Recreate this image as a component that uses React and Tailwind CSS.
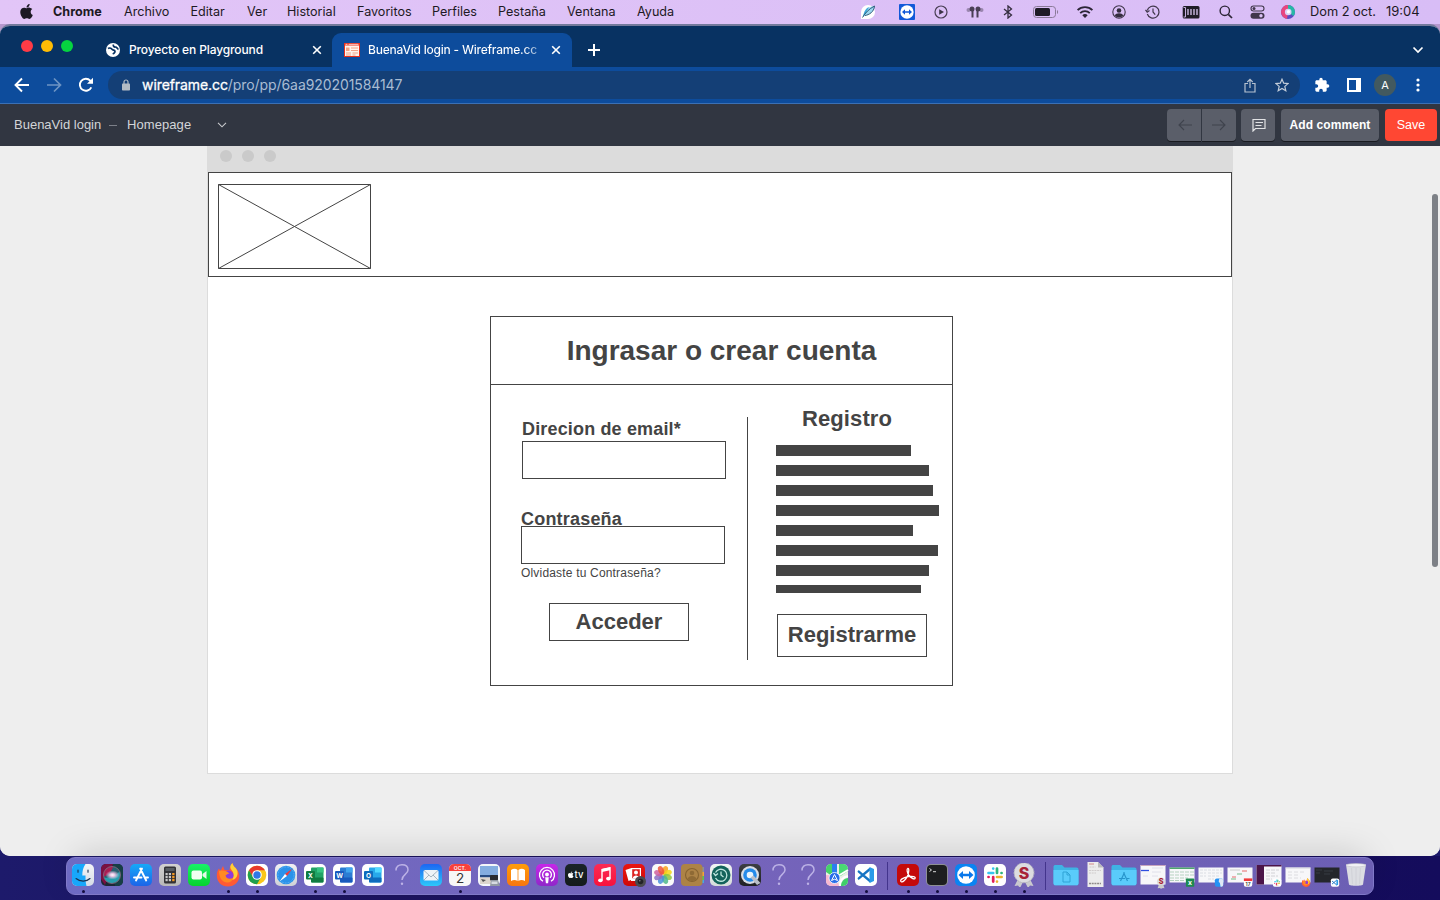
import React, { useId } from "react";
import { FaApple } from "react-icons/fa";
import { MdExtension } from "react-icons/md";

const P = ({ children, fill, to }) => {
  const id = useId();
  return (
    <svg viewBox="0 0 24 24" className="h-6 w-6 shrink-0">
      {to && (
        <linearGradient id={id} x1="0" y1="0" x2="0" y2="1"><stop stopColor={fill} /><stop offset="1" stopColor={to} /></linearGradient>
      )}
      {fill && <rect x="1" y="1" width="22" height="22" rx="5" fill={to ? `url(#${id})` : fill} />}
      {children}
    </svg>
  );
};

const sans = "Inter, sans-serif";

function Office({ light, mid, dark, letter }) {
  return (
    <P fill="#fff">
      <rect x="8" y="4.500" width="12.500" height="15" rx="1" fill={mid} />
      <rect x="14" y="4.500" width="6.500" height="5" fill={light} />
      <rect x="8" y="14.500" width="12.500" height="5" rx="1" fill={dark} />
      <rect x="3" y="8" width="9" height="8.500" rx="1" fill={dark} />
      <text x="7.500" y="14.600" fontSize="6.500" fontWeight="700" fill="#fff" textAnchor="middle" fontFamily={sans}>{letter}</text>
    </P>
  );
}

const Question = () => (
  <P>
    <path d="M6 7.500C6 3.500 8.500 1.800 12 1.800s6 2 6 5.200c0 4.500-6 4.500-6 10" fill="none" stroke="#bcb2e6" strokeWidth="1.500" />
    <circle cx="12" cy="20.800" r="1.200" fill="#bcb2e6" />
  </P>
);

const Finder = () => (
  <P fill="#f4f5f7" to="#d5dbe6">
    <path d="M6 1h8.500c-2.500 4-3.200 7-3.200 11.500h3.200c0 4 .2 7.500 1 10.500H6a5 5 0 0 1-5-5V6a5 5 0 0 1 5-5z" fill="#18a7fb" />
    <path d="M7 7v2.200M17 7v2.200M5 15.500c4 3.500 10.500 3.500 14 0" fill="none" stroke="#1b3250" strokeWidth="1.100" strokeLinecap="round" />
  </P>
);
const SiriApp = () => {
  const id = useId();
  return (
    <P fill="#1d2836">
      <path d="M1 16V6a5 5 0 0 1 5-5h7L5 22z" fill="#7a1040" />
      <path d="M13 1h5a5 5 0 0 1 5 5v12a5 5 0 0 1-5 5h-3z" fill="#173e44" />
      <radialGradient id={id}><stop stopColor="#fff" /><stop offset=".35" stopColor="#e7c4e4" /><stop offset="1" stopColor="#e7c4e4" stopOpacity="0" /></radialGradient>
      <circle cx="12" cy="12" r="8.500" fill="#285f70" />
      <path d="M3.700 10.500A8.500 8.500 0 0 1 13 3.600c-1 4-4 8-9 10z" fill="#a81f53" />
      <path d="M4 14.500c5 1 11-1 15.500-6 2 5-1 11.500-7.500 11.500-4 0-7-2.500-8-5.500z" fill="#279fae" />
      <ellipse cx="12.500" cy="12" rx="7" ry="4.500" fill={`url(#${id})`} />
      <circle cx="12" cy="12" r="8.500" fill="none" stroke="#8c6b82" strokeWidth=".8" />
    </P>
  );
};
const AppStore = () => (
  <P fill="#16a9f8" to="#1c64e8">
    <path d="M13 5.500L7 17.500M11.200 5.500l6 12M5 14.500h7.500M16 14.500h3" stroke="#fff" strokeWidth="1.900" strokeLinecap="round" />
  </P>
);
const Calculator = () => (
  <P fill="#d2d1d0" to="#b9b8b8">
    <rect x="6" y="3.500" width="12" height="17" rx="1.500" fill="#323236" />
    <rect x="7.500" y="5" width="9" height="3" fill="#575c61" />
    {[10.5, 13.5, 16.5].map((y) => (
      <g key={y}>
        <rect x="7.500" y={y - 0.5} width="2.200" height="2.200" fill="#c8c8c8" />
        <rect x="10.800" y={y - 0.5} width="2.200" height="2.200" fill="#c8c8c8" />
        <rect x="14.200" y={y - 0.5} width="2.300" height="2.200" fill="#f59a23" />
      </g>
    ))}
  </P>
);
const FaceTime = () => (
  <P fill="#18f267" to="#06d32f">
    <rect x="4.500" y="7.500" width="10.500" height="9" rx="2" fill="#f0fff2" />
    <path d="M15.500 11l4-3v8l-4-3z" fill="#e5fbe8" />
  </P>
);
const Fox = () => (
  <g>
    <path d="M12 23.500C5.500 23.500.8 19 .8 12.500c0-3 .8-5.500 2.200-7L4.500 8 7 3l1.500 4h5L14 4l2.500-4 1.500 4c3.500 2 5.300 5.500 5.300 9 0 6-5 10.500-11.300 10.500z" fill="#ff5a35" />
    <path d="M16.500 0c-2.500 2-3 4.500-1 7 3 3 2.500 8-.5 10 5 0 8-5 6-10-1-2.500-4-3.500-4.500-7z" fill="#ffd036" />
    <circle cx="12.500" cy="12.500" r="5" fill="#8d3bdc" />
    <path d="M3 8c4-1 8 0 10.500 2.500-2 0-2.500 1-4 2 1 4 5 4 8 2-1 4-4 5.500-7 5-5-.5-7.500-6-7.500-11.500z" fill="#ff8a22" />
  </g>
);
const ChromeApp = () => (
  <P fill="#fff">
    <circle cx="12" cy="12" r="9.300" fill="#fbc71a" />
    <path d="M3.950 7.350A9.300 9.300 0 0 1 20.050 7.350H12L8 14.300z" fill="#e8392c" />
    <path d="M3.950 7.350A9.300 9.300 0 0 0 12 21.300L16 14.300 8 14.300z" fill="#1fa04d" />
    <circle cx="12" cy="12" r="4.800" fill="#fff" />
    <circle cx="12" cy="12" r="3.700" fill="#2f78e6" />
  </P>
);
const Safari = () => (
  <P fill="#f1f1f3" to="#cfd1d6">
    <circle cx="12" cy="12" r="9.300" fill="#2a92ea" />
    <circle cx="12" cy="12" r="8" fill="none" stroke="#9bd0f7" strokeWidth=".7" strokeDasharray=".6 1" />
    <path d="M18.500 5.500l-5.500 7.500-2-2z" fill="#f03b3b" />
    <path d="M5.500 18.500l5.500-7.500 2 2z" fill="#fff" />
  </P>
);
const Mail = () => (
  <P fill="#1c66f3" to="#2cc8fa">
    <rect x="4.500" y="7" width="15" height="10.500" rx="1.500" fill="#eef3f7" />
    <path d="M5 7.500l7 6.500 7-6.500M5 17l5-5M19 17l-5-5" fill="none" stroke="#92a5b3" strokeWidth=".8" />
  </P>
);
const Calendar = () => (
  <P fill="#f7f7f7">
    <path d="M1 8V6a5 5 0 0 1 5-5h12a5 5 0 0 1 5 5v2z" fill="#f8413c" />
    <text x="12" y="6.500" fontSize="5" fontWeight="600" fill="#fff" textAnchor="middle" fontFamily={sans}>OCT.</text>
    <text x="12" y="20" fontSize="13.500" fill="#333" textAnchor="middle" fontFamily={sans}>2</text>
  </P>
);
const Preview = () => (
  <P fill="#f4f6fa">
    <path d="M3 3h18v10H3z" fill="#84ade0" />
    <path d="M3 12h18v2.500H3z" fill="#274b82" />
    <path d="M3 14.500h18V21H3z" fill="#dcd5cd" />
    <path d="M4 16l5 1-3 2z" fill="#555" />
    <rect x="13" y="12" width="8" height="5.500" rx="1" fill="#292b30" />
    <path d="M14 17h7l2 6h-10z" fill="#939aa5" />
    <rect x="14.500" y="18.500" width="6" height="2.500" fill="#d7dbe1" />
  </P>
);
const Books = () => (
  <P fill="#ff9d0a" to="#f9760f">
    <path d="M5 7c2.500-1.800 5-1.500 6.600 0v11c-2-1.300-4.300-1.300-6.600 0zM12.400 7c2-1.500 4.300-1.800 6.600 0v11c-2.300-1.300-4.800-1.300-6.600 0z" fill="#fff" />
  </P>
);
const Podcasts = () => (
  <P fill="#c727e8" to="#8f27c9">
    <g fill="none" stroke="#fff" strokeWidth="1.300">
      <path d="M8 18.300a7.500 7.500 0 1 1 8 0" />
      <path d="M9 14.800a4.400 4.400 0 1 1 6 0" />
    </g>
    <circle cx="12" cy="11.500" r="1.900" fill="#fff" />
    <path d="M10.200 14.300h3.600l-.7 6h-2.200z" fill="#fff" />
  </P>
);
const AppleTv = () => (
  <P fill="#1b2428" to="#141b1c">
    <FaApple x="3" y="8" size="7.500" color="#fff" />
    <text x="10.500" y="15.300" fontSize="9.500" fontWeight="500" fill="#fff" fontFamily={sans}>tv</text>
  </P>
);
const Music = () => (
  <P fill="#fb2b55" to="#f8123c">
    <path d="M9 17V6.500l8-1.700v10.500" fill="none" stroke="#fff" strokeWidth="1.400" />
    <path d="M9 6l8-1.700v3L9 9z" fill="#fff" />
    <ellipse cx="7.400" cy="17.300" rx="2.300" ry="1.900" fill="#fff" />
    <ellipse cx="15.400" cy="15.600" rx="2.300" ry="1.900" fill="#fff" />
  </P>
);
const PhotoBooth = () => (
  <P fill="#ea1511" to="#cf0907">
    <path d="M3.500 7l6-2 2 11-5 2z" fill="#fff" />
    <rect x="9" y="5" width="10" height="13" fill="#fff" />
    <rect x="10.200" y="6.200" width="7.600" height="9" fill="#dd2220" />
    <circle cx="14" cy="9.500" r="2" fill="#fff" />
    <path d="M10.800 15c.5-3.500 6-3.500 6.500 0z" fill="#fff" />
    <circle cx="18.500" cy="18.500" r="5.500" fill="#4b4b50" />
    <circle cx="18.500" cy="18.500" r="2.800" fill="#222226" />
    <circle cx="17.800" cy="17.800" r=".8" fill="#8a8a95" />
  </P>
);
const petals = ["#f9a01b", "#f5d515", "#8ec63f", "#4fb98a", "#4a90d9", "#8a6fc4", "#cf5f9d", "#f0533a"];
const Photos = () => (
  <P fill="#fafafa">
    {petals.map((c, i) => (
      <ellipse key={c} cx="12" cy="7" rx="2.800" ry="4.400" fill={c} opacity=".85" transform={`rotate(${i * 45 + 22} 12 12)`} />
    ))}
  </P>
);
const Contacts = () => (
  <P>
    <path d="M21 4h3v5h-3z" fill="#8b8f97" />
    <path d="M21 9h3v4h-3z" fill="#f2a536" />
    <path d="M21 13h3v4h-3z" fill="#5ec453" />
    <path d="M21 17h3v3h-3z" fill="#45a7e8" />
    <rect x="1" y="1" width="21.500" height="22" rx="4" fill="#ad8346" />
    <circle cx="12" cy="12" r="6.500" fill="none" stroke="#876330" strokeWidth="1.100" />
    <circle cx="12" cy="10" r="2.300" fill="#8f6a35" />
    <path d="M7.500 16c1-4 8-4 9 0-2 2.500-7 2.500-9 0z" fill="#8f6a35" />
  </P>
);
const TimeMachine = () => (
  <P fill="#f2f5f4" to="#d5dcda">
    <circle cx="12" cy="12" r="9.500" fill="#13635b" />
    <path d="M6.500 9.500A6 6 0 1 1 6.500 15M4.500 10l2 2.500L9 10.500M12 8.500V12l2.500 2" fill="none" stroke="#bfe7df" strokeWidth="1.300" />
  </P>
);
const QuickTime = () => (
  <P fill="#3c3e43" to="#202125">
    <circle cx="12" cy="12" r="9" fill="#d9dde5" />
    <circle cx="12" cy="12" r="6.800" fill="#258bea" />
    <circle cx="12" cy="12" r="3.300" fill="#e9f4fd" />
    <path d="M12.500 14.500l3-2 7 7.500-3.500 2z" fill="#b9bec9" />
  </P>
);
const Maps = () => (
  <P fill="#e9f0e6">
    <path d="M1 7V6a5 5 0 0 1 5-5h1v12L1 9z" fill="#45d26a" />
    <path d="M14 1h4a5 5 0 0 1 5 5v2L14 14z" fill="#49d873" />
    <path d="M7 1h5v12H7z" fill="#2b7df0" />
    <path d="M1 12c7 0 12 4 13 11H6a5 5 0 0 1-5-5z" fill="#f7b8d0" />
    <path d="M13 13l10-6M15 23c0-6 3-9 8-10" stroke="#fff" strokeWidth="2" fill="none" />
    <path d="M16 23c0-4 3-8 7-8v3a5 5 0 0 1-5 5z" fill="#3fcf69" />
    <circle cx="9.500" cy="15" r="5.500" fill="#2a6fe8" stroke="#fff" strokeWidth=".8" />
    <path d="M9.500 11.500l3 6-3-1.300-3 1.300z" fill="none" stroke="#fff" strokeWidth="1" />
  </P>
);
const CodeMark = () => (
  <g>
    <path d="M4.800 8.600L16 18M4.800 15.400L16 6" stroke="#1674c4" strokeWidth="2.400" strokeLinecap="round" />
    <path d="M15.500 4L20 6v12l-4.500 2z" fill="#2a9be8" />
  </g>
);
const Code = () => (<P fill="#fff"><CodeMark /></P>);
const Acrobat = () => (
  <P fill="#c40a0a">
    <path d="M5 18.500c-1.500-1.500 2-3.800 7-4.800 5-.8 8 .3 7 1.800-1 1.200-4-.5-6-3-2-2.800-2.500-6.500-1.200-7 1.500-.3 1.200 4-.3 7.500-1.500 3.300-4.800 7-6.500 5.500z" fill="none" stroke="#fff" strokeWidth="1.300" />
  </P>
);
const Terminal = () => (
  <P fill="#8d8f93">
    <rect x="2" y="2" width="20" height="20" rx="4" fill="#1d1e20" />
    <path d="M4.500 5.500l2 1.500-2 1.500M8 8.700h3" fill="none" stroke="#eee" strokeWidth=".9" />
  </P>
);
const Arrows = ({ color }) => (
  <path d="M4.500 12L9 8v2.800h6V8l4.500 4-4.500 4v-2.800H9V16z" fill={color} />
);
const TeamViewer = () => (
  <P fill="#0a84f2">
    <circle cx="12" cy="12" r="8.800" fill="#fff" />
    <Arrows color="#0a78ea" />
  </P>
);
const SlackMark = () => (
  <g strokeWidth="2.700" strokeLinecap="round">
    <path d="M10.200 5.500v.1M5.500 10h4.700" stroke="#36c5f0" />
    <path d="M14 5.500V10M18.500 10h.1" stroke="#2eb67d" />
    <path d="M14 14h4.600M14 18.500v.1" stroke="#ecb22e" />
    <path d="M10.200 14v4.600M5.500 14h.1" stroke="#e01e5a" />
  </g>
);
const Slack = () => (<P fill="#fff"><SlackMark /></P>);
const Seal = () => (
  <P>
    <path d="M6 16L2.500 23l3.500-.5L8 25l3-6zM18 16l3.500 7-3.500-.5L16 25l-3-6z" fill="#c9c9ce" />
    <circle cx="12" cy="9.800" r="10" fill="#dcdce0" stroke="#b4b4bc" strokeWidth="1" strokeDasharray="2 1" />
    <text x="12" y="15.600" fontSize="16" fontWeight="800" fill="#a82336" textAnchor="middle" fontFamily={sans}>S</text>
  </P>
);
const Folder = ({ children }) => (
  <svg viewBox="0 0 26 24" className="h-6 w-[26px] shrink-0">
    <path d="M.5 4c0-1.500.8-2 2-2H9l2.500 2.500h12c1.300 0 2 .7 2 2V20c0 1.500-.8 2.300-2 2.300h-21c-1.200 0-2-.8-2-2.300z" fill="#3fb3e4" />
    <path d="M.5 7h25v13c0 1.500-.8 2.300-2 2.300h-21c-1.200 0-2-.8-2-2.300z" fill="#5accfb" />
    {children}
  </svg>
);
const Paper = () => (
  <svg viewBox="0 0 24 24" className="h-6 w-6 shrink-0 overflow-visible">
    <path d="M4.500-1H15l5.500 5.500V24h-16z" fill="#ececec" />
    <path d="M15-1v5.500h5.500z" fill="#bbb" />
    <path d="M6 1h5" stroke="#d99a9a" strokeWidth="1.200" />
    <path d="M6.500 4h6M6 7.500h12M6 10h7" stroke="#c9c4c4" strokeWidth=".8" strokeDasharray="2 .7" />
    <path d="M6 20.500h12" stroke="#8f8a8a" strokeWidth="1.300" strokeDasharray="2 .7" />
  </svg>
);
const Thumb = ({ tall, dark, children, badge }) => (
  <svg viewBox="0 0 26 24" className="h-6 w-[26px] shrink-0 overflow-visible">
    <rect x=".5" y={tall ? 2 : 4.5} width="25" height={tall ? 19.5 : 15} fill={dark || "#f7f7f9"} />
    {children}
    <g transform="translate(16.500 15) scale(.38)">{badge}</g>
  </svg>
);
const badgePlate = <rect x="1" y="1" width="22" height="22" rx="5" fill="#fff" />;
const Trash = () => (
  <P>
    <path d="M2 1.500h20l-3 20c-.3 1.700-13.700 1.700-14 0z" fill="#dcdde2" />
    <path d="M7.500 5l1 16M12 5v17M16.500 5l-1 16" stroke="#d2d3d9" strokeWidth="1.200" />
    <ellipse cx="12" cy="2.200" rx="10" ry="1.700" fill="#f2f2f5" stroke="#bfc0c8" strokeWidth=".6" />
  </P>
);

const dockApps = [
  [<Finder />, 1], [<SiriApp />], [<AppStore />], [<Calculator />], [<FaceTime />],
  [<P><Fox /></P>, 1], [<ChromeApp />, 1], [<Safari />],
  [<Office light="#35c481" mid="#21a366" dark="#107c41" letter="X" />, 1],
  [<Office light="#41a5ee" mid="#2b7cd3" dark="#185abd" letter="W" />, 1],
  [<Office light="#50d9ff" mid="#28a8ea" dark="#0f6cbd" letter="O" />],
  [<Question />], [<Mail />], [<Calendar />, 1], [<Preview />], [<Books />], [<Podcasts />],
  [<AppleTv />], [<Music />], [<PhotoBooth />], [<Photos />], [<Contacts />], [<TimeMachine />],
  [<QuickTime />], [<Question />], [<Question />], [<Maps />], [<Code />, 1],
];
const dockRecent = [[<Acrobat />, 1], [<Terminal />, 1], [<TeamViewer />, 1], [<Slack />, 1], [<Seal />, 1]];
const dockFiles = [
  [<Folder><path d="M10 9h4l3 3v7h-7zM14 9v3h3" fill="none" stroke="#2fa3d6" strokeWidth="1" /></Folder>],
  [<Paper />],
  [<Folder><path d="M13.500 9.500L9.500 18M12.500 9.500l4 8.500M8 15.500h6M16 15.500h2.500" stroke="#2795cc" strokeWidth="1.200" /></Folder>],
  [<Thumb tall badge={<g><circle cx="12" cy="10" r="11" fill="#ddd" /><path d="M6 18l-3 9 5-1 4 2 5-2 4 1-3-9z" fill="#ccc" /><text x="12" y="17" fontSize="19" fontWeight="800" fill="#a82336" textAnchor="middle" fontFamily={sans}>S</text></g>}>
    <path d="M.5 2.500h25" stroke="#c9a6bd" /><path d="M1 7.500h8" stroke="#2f4fe0" strokeWidth="1.300" /><path d="M12 5h11M12 9h9M3 13h5M12 13h6" stroke="#e0e0ea" />
  </Thumb>],
  [<Thumb badge={<g><rect x="1" y="1" width="22" height="22" rx="2" fill="#1d8b50" /><text x="12" y="19" fontSize="18" fontWeight="700" fill="#fff" textAnchor="middle" fontFamily={sans}>x</text></g>}>
    <path d="M.5 5.200h25" stroke="#3c9c5f" strokeWidth="1.400" /><path d="M1 9h24M1 12h24M1 15h18M1 17.500h15" stroke="#b5d1bf" strokeDasharray="4 1" />
  </Thumb>],
  [<Thumb badge={<g><rect x="1" y="1" width="22" height="22" rx="5" fill="#2593f4" /><path d="M13 1c-3 8-2 11 1 11l2 11h2a5 5 0 0 0 5-5V6a5 5 0 0 0-5-5z" fill="#dfe8f5" /></g>}>
    <path d="M2 7h22M2 10h6M10 10h14M2 13h6M10 13h12M10 16h6" stroke="#dadde3" strokeDasharray="3 1" />
  </Thumb>],
  [<Thumb badge={<g>{badgePlate}<path d="M1 8V1h22v7z" fill="#f03b3b" /><text x="12" y="21" fontSize="13" fontWeight="600" fill="#333" textAnchor="middle" fontFamily={sans}>17</text></g>}>
    <path d="M3 7h10" stroke="#ccc" /><path d="M15 8h5M5 14h4" stroke="#e66a6a" /><path d="M10 11h5M4 16h5" stroke="#72b987" />
  </Thumb>],
  [<Thumb tall badge={<g>{badgePlate}<SlackMark /></g>}>
    <path d="M.5 2h25v1.500H8v18H.5z" fill="#4b1549" /><path d="M10 7h13M10 10h10M10 13h12M10 16h6" stroke="#d2d2d6" strokeDasharray="4 1" />
  </Thumb>],
  [<Thumb badge={<Fox />}>
    <path d="M.5 5h25" stroke="#d2d2dc" /><path d="M3 9h18M3 12h11M3 15h13" stroke="#dcdce0" strokeDasharray="4 2" />
  </Thumb>],
  [<Thumb dark="#24262b" badge={<g>{badgePlate}<CodeMark /></g>}>
    <path d="M2 7h6M2 10h4M10 8h9M10 11h6" stroke="#3d4149" strokeWidth=".8" />
  </Thumb>],
  [<Trash />],
];

const DockGroup = ({ items }) => (
  <div className="flex">
    {items.map(([icon, running], i) => (
      <div key={i} className="flex w-[29px] flex-col items-center pt-[4.500px]">
        {icon}
        {running && <span className="mt-[3.500px] h-[3px] w-[3px] rounded-full bg-[#130d3e]" />}
      </div>
    ))}
  </div>
);
const DockDivider = () => (
  <div className="flex w-[13px] justify-center pt-1"><span className="h-7 w-px bg-[#43348c]" /></div>
);

const menu = [
  ["Archivo", "w-[66.500px]"], ["Editar", "w-[56.500px]"], ["Ver", "w-[40px]"], ["Historial", "w-[70px]"],
  ["Favoritos", "w-[75px]"], ["Perfiles", "w-[66px]"], ["Pestaña", "w-[69px]"], ["Ventana", "w-[70px]"], ["Ayuda", "w-[60px]"],
];

function MenuBar() {
  return (
    <div className="flex h-6 shrink-0 items-center bg-linear-to-r from-[#e2c5f7] to-[#d8bdf6] text-[12.600px] whitespace-nowrap text-[#1d1924]">
      <FaApple className="mb-px ml-[18px] h-[17px] w-[17px] shrink-0" />
      <span className="ml-[18px] w-[71px] shrink-0 font-bold">Chrome</span>
      {menu.map(([label, w]) => <span key={label} className={`${w} shrink-0`}>{label}</span>)}
      <div className="ml-auto flex items-center">
        <svg viewBox="0 0 16 16" className="h-4 w-4"><path d="M1 15V8a7 7 0 1 1 7 7z" fill="#fff" /><path d="M3 13C4 7 8 2.500 14.500 2 14 8 9 11 5 11.500z" fill="#9bd6ee" /><path d="M3 13C4 7 6 4 9 3l-3 6z" fill="#3fa9dc" /><path d="M14.500 2C9 5 5 9 2.500 13.500M14.500 2C14 8 9 11 5 11.500" fill="none" stroke="#24506d" strokeWidth=".9" /></svg>
        <svg viewBox="0 0 24 24" className="ml-[23px] h-4 w-4"><rect width="24" height="24" rx="1.500" fill="#1258d8" /><circle cx="12" cy="12" r="10" fill="#fff" /><Arrows color="#1258d8" /></svg>
        <svg viewBox="0 0 14 14" className="ml-[19px] h-[14px] w-[14px]"><circle cx="7" cy="7" r="6" fill="none" stroke="#4a3f55" strokeWidth="1.200" /><path d="M5.200 4.300v5.400L10 7z" fill="#3c3346" /></svg>
        <svg viewBox="0 0 18 14" className="ml-[18px] h-[14px] w-[18px]"><g fill="#4a3f55"><circle cx="6" cy="4" r="2.500" /><path d="M5.500 4h2v8.500h-2z" /><circle cx="12" cy="4" r="2.500" /><path d="M10.500 4h2v8.500h-2z" /><circle cx="2.500" cy="5" r="2" opacity=".45" /><circle cx="15.500" cy="5" r="2" opacity=".45" /></g></svg>
        <svg viewBox="0 0 10 14" className="ml-[19px] h-[14px] w-[10px]"><path d="M1 4l7.500 6L5 13V1l3.500 3L1 10" fill="none" stroke="#352d3f" strokeWidth="1.300" /></svg>
        <svg viewBox="0 0 26 12" className="ml-5 h-3 w-[26px]"><rect x=".5" y=".5" width="22" height="11" rx="3" fill="none" stroke="#8a7a98" /><rect x="2" y="2" width="15" height="8" rx="1.500" fill="#1f1b26" /><path d="M24 4c1.500.5 1.500 3.500 0 4z" fill="#8a7a98" /></svg>
        <svg viewBox="0 0 18 14" className="ml-[17px] h-[14px] w-[18px]"><g fill="none" stroke="#2c2536" strokeWidth="1.800"><path d="M1.600 5.200a10.500 10.500 0 0 1 14.800 0M4.200 8.200a6.800 6.800 0 0 1 9.600 0" /></g><path d="M9 13L6.300 10.300a3.800 3.800 0 0 1 5.400 0z" fill="#2c2536" /></svg>
        <svg viewBox="0 0 14 14" className="ml-[18px] h-[14px] w-[14px]"><circle cx="7" cy="7" r="6.200" fill="none" stroke="#40364b" strokeWidth="1.100" /><circle cx="7" cy="5.500" r="2.300" fill="#352d3f" /><path d="M2.800 10.500c1-3 7.400-3 8.400 0-2 2.500-6.400 2.500-8.400 0z" fill="#352d3f" /></svg>
        <svg viewBox="0 0 15 14" className="ml-[19px] h-[14px] w-[15px]"><path d="M2.200 5.500A6 6 0 1 1 2.300 9M.5 4.800l1.700 2.400 2.300-1.700M8 3.500V7l2.200 2.600" fill="none" stroke="#40364b" strokeWidth="1.200" /></svg>
        <svg viewBox="0 0 18 14" className="ml-[22px] h-[14px] w-[18px]"><rect x=".7" y="1" width="16.800" height="12.500" rx="1.500" fill="#1f1b26" /><path d="M1.500 2.500h2v9.500h-2" fill="none" stroke="#d6bdf0" strokeWidth=".9" /><path d="M6 4v6M9 4v6M12 4v6M15 4v6" stroke="#ad9cc0" strokeWidth="1.700" /></svg>
        <svg viewBox="0 0 14 14" className="ml-[19px] h-[14px] w-[14px]"><circle cx="5.800" cy="5.800" r="4.700" fill="none" stroke="#2c2536" strokeWidth="1.400" /><path d="M9.300 9.300L13 13" stroke="#2c2536" strokeWidth="1.700" /></svg>
        <svg viewBox="0 0 15 14" className="ml-[17px] h-[14px] w-[15px]"><rect x="1" y="1" width="13" height="5" rx="2.500" fill="none" stroke="#40364b" strokeWidth="1.100" /><circle cx="4" cy="3.500" r="1.500" fill="#40364b" /><rect x=".5" y="7.700" width="14" height="6" rx="3" fill="#40364b" /><circle cx="11" cy="10.700" r="1.700" fill="#dcc3f6" /></svg>
        <svg viewBox="0 0 14 14" className="ml-4 h-[14px] w-[14px]"><circle cx="7" cy="7" r="7" fill="#5b4cc2" /><path d="M0 7a7 7 0 0 1 8-7L6 13.900A7 7 0 0 1 0 7z" fill="#e8467f" /><path d="M7 0a7 7 0 0 1 7 7c0 2-1 3-1.500 4L7 7z" fill="#27b7a6" /><circle cx="7.200" cy="7" r="3.300" fill="#d9d3f6" /><circle cx="7.500" cy="6.800" r="1.700" fill="#fff" /></svg>
        <span className="ml-[15px] w-[76px] text-[12.800px]">Dom 2 oct.</span>
        <span className="w-[54px] text-[13px]">19:04</span>
      </div>
    </div>
  );
}

const Close = () => (
  <svg viewBox="0 0 10 10" className="h-[10px] w-[10px] shrink-0"><path d="M1.200 1.200l7.600 7.600M8.800 1.200L1.200 8.800" stroke="#fff" strokeWidth="1.600" /></svg>
);

function TabStrip() {
  return (
    <div className="flex h-[42px] shrink-0 items-end bg-[#083262] text-[12px] font-medium tracking-[-0.120px] whitespace-nowrap text-white">
      <div className="flex h-full w-[97px] shrink-0 gap-2 pt-[15px] pl-[21px]">
        <span className="h-3 w-3 rounded-full bg-[#ff3b46]" />
        <span className="h-3 w-3 rounded-full bg-[#ffbc05]" />
        <span className="h-3 w-3 rounded-full bg-[#06d440]" />
      </div>
      <div className="flex h-[34px] w-[235px] shrink-0 items-center rounded-br-[9px] pl-[9px]">
        <svg viewBox="0 0 14 14" className="h-[14px] w-[14px] shrink-0"><circle cx="7" cy="7" r="7" fill="#fff" /><path d="M2 5.500C3 4.800 5 5 6 6.300s2.500.5 3 2-1.500 1.500-2 3M7.500 1.500C6.800 3 8 4.200 9.500 4s1.500 2 3 2.300" fill="none" stroke="#083262" strokeWidth="1.700" /></svg>
        <span className="ml-[9px] w-[183px] shrink-0">Proyecto en Playground</span>
        <Close />
      </div>
      <div className="flex h-[34px] w-[240px] shrink-0 items-center rounded-t-[9px] bg-[#0d4c9c] pl-3">
        <svg viewBox="0 0 16 14" className="h-[14px] w-4 shrink-0"><rect width="16" height="14" fill="#e8311c" /><path d="M1 2.500h14V13H1z" fill="#fff4ec" /><path d="M1.500 1.300h2M4.500 1.300h10" stroke="#fff" strokeWidth=".8" /><path d="M2 4.500h3.500V8H2z" fill="#f6a183" /><path d="M7 5h7M7 7.500h7M2 10h5M8.500 10H14M2 12h5M8.500 12h3" stroke="#f29a7a" strokeWidth=".9" /></svg>
        <span className="ml-2 w-[177px] shrink-0 bg-linear-to-r from-white from-88% to-white/20 bg-clip-text tracking-[-0.220px] text-transparent">BuenaVid login - Wireframe.cc</span>
        <span className="ml-[6px] flex"><Close /></span>
      </div>
      <div className="flex h-[34px] grow items-center justify-between pr-4 pl-4">
        <svg viewBox="0 0 12 12" className="h-3 w-3"><path d="M6 0v12M0 6h12" stroke="#fff" strokeWidth="2" /></svg>
        <svg viewBox="0 0 12 8" className="h-2 w-3"><path d="M1.500 1.500L6 6l4.500-4.500" fill="none" stroke="#fff" strokeWidth="1.700" /></svg>
      </div>
    </div>
  );
}

function AddressBar() {
  return (
    <div className="flex h-[37px] shrink-0 items-center border-b border-[#3b70b4] bg-[#0d4c9c]">
      <svg viewBox="0 0 16 16" className="ml-[14px] h-4 w-4"><path d="M15 8H2M8 1.500L1.500 8 8 14.500" fill="none" stroke="#fff" strokeWidth="1.900" /></svg>
      <svg viewBox="0 0 16 16" className="ml-4 h-4 w-4"><path d="M1 8h13M8 1.500L14.500 8 8 14.500" fill="none" stroke="#6e94c4" strokeWidth="1.700" /></svg>
      <svg viewBox="0 0 16 16" className="ml-4 h-4 w-4"><path d="M13.300 10.300A6 6 0 1 1 12.300 3.700L14 5.500" fill="none" stroke="#fff" strokeWidth="1.900" /><path d="M15 .8v6H9z" fill="#fff" /></svg>
      <div className="ml-[14px] flex h-7 w-[1192px] items-center rounded-full bg-[#143f76] pr-[11px] pl-[14px]">
        <svg viewBox="0 0 8 12" className="h-3 w-2"><path d="M2 5V3a2 2 0 0 1 4 0v2" fill="none" stroke="#b4bcc4" strokeWidth="1.200" /><rect y="4.500" width="8" height="7" rx=".8" fill="#b4bcc4" /></svg>
        <span className="ml-3 grow pb-px text-[14px] tracking-[-0.080px] text-[#a9bcd3]"><span className="text-white [-webkit-text-stroke:0.300px_white]">wireframe.cc</span>/pro/pp/6aa920201584147</span>
        <svg viewBox="0 0 12 15" className="h-[15px] w-3"><path d="M4 5.500H1V14h10V5.500H8M6 10V1.500M3.300 4L6 1.300 8.700 4" fill="none" stroke="#b6c2d0" strokeWidth="1.200" /></svg>
        <svg viewBox="0 0 14 14" className="ml-[19px] h-[14px] w-[14px]"><path d="M7 1.200l1.700 4 4.400.4-3.300 2.800 1 4.300L7 10.400l-3.800 2.300 1-4.300L.9 5.600l4.400-.4z" fill="none" stroke="#c3cdd9" strokeWidth="1.200" /></svg>
      </div>
      <MdExtension className="ml-[14px] h-4 w-4 text-white" />
      <svg viewBox="0 0 14 14" className="ml-[17px] h-[14px] w-[14px]"><path d="M1 1h12v12H1z" fill="none" stroke="#fff" strokeWidth="2" /><path d="M9 0h5v14H9z" fill="#fff" /></svg>
      <span className="ml-[13px] flex h-[22px] w-[22px] items-center justify-center rounded-full bg-[#42595f] text-[11px] text-white">A</span>
      <svg viewBox="0 0 4 14" className="ml-5 h-[14px] w-1" fill="#fff"><circle cx="2" cy="2" r="1.600" /><circle cx="2" cy="7" r="1.600" /><circle cx="2" cy="12" r="1.600" /></svg>
    </div>
  );
}

const btn = "flex h-8 items-center justify-center bg-[#5a5e69] shadow-[0_1px_0_#191b20]";

function AppHeader() {
  return (
    <div className="flex h-[42px] shrink-0 items-center bg-[#313641] pr-[3px] pl-[14px] font-['Liberation_Sans',sans-serif] text-[13px] whitespace-nowrap text-[#d3d5d8]">
      <span className="w-[95px]">BuenaVid login</span>
      <span className="h-px w-2 bg-[#7c8089]" />
      <span className="ml-[10px] w-[90px] tracking-[0.080px]">Homepage</span>
      <svg viewBox="0 0 10 6" className="h-[6px] w-[10px]"><path d="M1 .8l4 4 4-4" fill="none" stroke="#c8cacd" strokeWidth="1.100" /></svg>
      <div className="ml-auto flex">
        <div className={`${btn} w-[34px] rounded-l-[4px]`}><svg viewBox="0 0 14 12" className="ml-[2px] h-3 w-[14px]"><path d="M14 6H1M6 1L1 6l5 5" fill="none" stroke="#3f434d" strokeWidth="1.100" /></svg></div>
        <div className={`${btn} ml-px w-[34px] rounded-r-[4px]`}><svg viewBox="0 0 14 12" className="h-3 w-[14px]"><path d="M0 6h13M8 1l5 5-5 5" fill="none" stroke="#3f434d" strokeWidth="1.100" /></svg></div>
        <div className={`${btn} ml-[5px] w-[34px] rounded-[4px]`}><svg viewBox="0 0 14 14" className="ml-px h-[14px] w-[14px]"><path d="M1 13V1.500h12v9H3.500zM3.500 4.500h7.500M3.500 7.500h6" fill="none" stroke="#e2e3e5" strokeWidth="1.200" /></svg></div>
        <div className={`${btn} ml-[6px] w-[98px] rounded-[4px] text-[12px] font-bold tracking-[0.080px] text-white`}>Add comment</div>
        <div className="ml-[6px] flex h-8 w-[52px] items-center justify-center rounded-[4px] bg-[#ff4733] text-[12.500px] text-white">Save</div>
      </div>
    </div>
  );
}

const textBars = [135, 153, 157, 163, 137, 162, 153, 145];

function LoginCard() {
  return (
    <div className="ml-[282px] mt-[39px] flex h-[370px] w-[463px] flex-col border border-[#444] whitespace-nowrap">
      <h1 className="flex h-[68px] shrink-0 items-center justify-center border-b border-[#444] text-[28px] font-bold">Ingrasar o crear cuenta</h1>
      <div className="flex grow">
        <div className="w-[256px] shrink-0 pl-[30px]">
          <p className="ml-px mt-[34px] h-[22px] text-[18px] leading-5 font-bold tracking-[0.160px]">Direcion de email*</p>
          <div className="ml-px h-[38px] w-[204px] border border-[#444]" />
          <p className="mt-[30px] h-[17px] text-[18px] leading-5 font-bold tracking-[0.200px]">Contraseña</p>
          <div className="h-[38px] w-[204px] border border-[#444]" />
          <p className="mt-[1px] h-[38px] text-[12px] leading-4 tracking-[0.180px]">Olvidaste tu Contraseña?</p>
          <div className="ml-7 flex h-[38px] w-[140px] items-center justify-center border border-[#444] pb-[2px] text-[22px] font-bold">Acceder</div>
        </div>
        <div className="mt-8 h-[243px] w-px shrink-0 bg-[#444]" />
        <div className="flex w-[204px] shrink-0 flex-col pl-7">
          <p className="mt-[20px] ml-[26px] h-[40px] text-[22px] leading-7 font-bold tracking-[0.100px]">Registro</p>
          <div className="flex flex-col gap-[9px]">
            {textBars.map((w, i) => <span key={i} className={i === 7 ? "h-2 bg-[#444]" : "h-[11px] bg-[#444]"} style={{ width: w }} />)}
          </div>
          <div className="mt-[21px] ml-px flex h-[43px] w-[150px] items-center justify-center border border-[#444] pb-[2px] text-[22px] font-bold">Registrarme</div>
        </div>
      </div>
    </div>
  );
}

export default function App() {
  return (
    <div className="flex h-[900px] w-[1440px] flex-col overflow-hidden bg-[#19145c] font-[Inter,sans-serif]">
      <MenuBar />
      <div className="flex h-[832px] shrink-0 flex-col bg-linear-to-b from-[#b597cd] from-50% to-[#1d1a6b] to-50%">
        <div className="flex h-full flex-col overflow-hidden rounded-[10px] border-t-2 border-[#737a9c] bg-[#eee]">
          <div className="-mt-px flex grow flex-col">
            <TabStrip />
            <AddressBar />
            <AppHeader />
            <div className="flex grow justify-between bg-[#eee] font-['Liberation_Sans',sans-serif] text-[#444]">
              <div className="ml-[207px] h-[628px] w-[1026px] border border-t-0 border-[#dcdcdc] bg-white">
                <div className="flex h-[26px] gap-[10px] bg-[#dcdcdc] pt-1 pl-3">
                  <span className="h-3 w-3 rounded-full bg-[#cacaca]" />
                  <span className="h-3 w-3 rounded-full bg-[#cacaca]" />
                  <span className="h-3 w-3 rounded-full bg-[#cacaca]" />
                </div>
                <div className="h-[105px] border border-[#444] pt-[11px] pl-[9px]">
                  <svg viewBox="0 0 153 85" className="h-[85px] w-[153px]"><path d="M.5.5h152v84H.5zM.5.500l152 84M152.500.500L.5 84.500" fill="none" stroke="#444" /></svg>
                </div>
                <LoginCard />
              </div>
              <div className="mt-12 mr-[2px] h-[373px] w-[6px] rounded-full bg-[#7d8086]" />
            </div>
          </div>
        </div>
      </div>
      <div className="flex grow justify-center bg-linear-to-r from-[#1d1a6b] via-[#1b0f58] to-[#140c5c] pt-px">
        <div className="relative flex h-[38px] w-[1308px] justify-center rounded-[9px] border border-[#8179c8] bg-linear-to-r from-[#6e6bc3] via-[#7564bb] to-[#6c5fb4] pr-px shadow-[0_-8px_36px_-10px_rgba(0,0,0,0.26)]">
          <DockGroup items={dockApps} />
          <DockDivider />
          <DockGroup items={dockRecent} />
          <DockDivider />
          <DockGroup items={dockFiles} />
        </div>
      </div>
    </div>
  );
}
